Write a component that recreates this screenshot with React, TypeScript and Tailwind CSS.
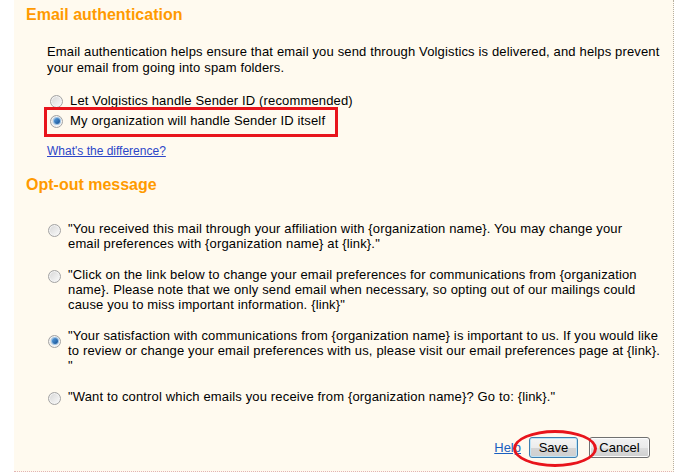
import React from 'react';

function Radio({ checked = false }: { checked?: boolean }) {
  return (
    <span className="relative inline-flex w-[13px] h-[13px] shrink-0 items-center justify-center rounded-full border border-[#a3a3a3] bg-gradient-to-br from-[#d6d6d6] to-[#fbfbfb] shadow-[inset_0_0_0_1px_#f4f4f4]">
      {checked && (
        <span className="block w-[6px] h-[6px] rounded-full bg-gradient-to-br from-[#5aa0e0] to-[#0f4f94] shadow-[0_0_0_1px_#9cc3e6]" />
      )}
    </span>
  );
}

function Option({ checked = false, lines }: { checked?: boolean; lines: string[] }) {
  return (
    <div className="flex items-start">
      <div className="w-[20px] pt-[2px]">
        <Radio checked={checked} />
      </div>
      <div className="leading-[15px] whitespace-nowrap">
        {lines.map((l, i) => (
          <div key={i} className="h-[15px]">{l}</div>
        ))}
      </div>
    </div>
  );
}

export default function App() {
  return (
    <div className="w-[678px] h-[472px] bg-white overflow-hidden" style={{ fontFamily: '"Liberation Sans", Arial, sans-serif' }}>
      <div className="relative ml-[14px] w-[660px] h-[472px] bg-[#fffaef] border-r border-b border-dotted border-r-[#b8b0a0] border-b-[#e2b4b4] text-[13px] text-black tracking-[0.15px]">
        <h2 className="pl-[12px] pt-[6px] text-[16px] leading-[18px] font-bold tracking-normal text-[#ff9a00]">Email authentication</h2>

        <p className="mt-[20px] ml-[33px] leading-[16px]">
          Email authentication helps ensure that email you send through Volgistics is delivered, and helps prevent
          <br />
          your email from going into spam folders.
        </p>

        <div className="mt-[15px] ml-[36px]">
          <div className="flex h-[20px] items-center gap-[7px]">
            <Radio />
            <span>Let Volgistics handle Sender ID (recommended)</span>
          </div>
          <div className="relative flex h-[20px] items-center gap-[7px]">
            <Radio checked />
            <span>My organization will handle Sender ID itself</span>
            <span className="absolute left-[-6px] top-[-4px] w-[294px] h-[30px] border-[3px] border-[#e8141c]" />
          </div>
        </div>

        <a href="#" className="block mt-[13px] ml-[33px] w-fit text-[12px] leading-[14px] tracking-normal text-[#2c46c8] underline">
          What's the difference?
        </a>

        <h2 className="mt-[18px] pl-[12px] text-[16px] leading-[18px] font-bold tracking-normal text-[#ff9a00]">Opt-out message</h2>

        <div className="mt-[27px] ml-[34px] flex flex-col gap-[16px]">
          <Option
            lines={[
              '"You received this mail through your affiliation with {organization name}. You may change your',
              'email preferences with {organization name} at {link}."',
            ]}
          />
          <Option
            lines={[
              '"Click on the link below to change your email preferences for communications from {organization',
              'name}. Please note that we only send email when necessary, so opting out of our mailings could',
              'cause you to miss important information. {link}"',
            ]}
          />
          <Option
            checked
            lines={[
              '"Your satisfaction with communications from {organization name} is important to us. If you would like',
              'to review or change your email preferences with us, please visit our email preferences page at {link}.',
              '"',
            ]}
          />
          <Option
            lines={['"Want to control which emails you receive from {organization name}? Go to: {link}."']}
          />
        </div>

        <div className="absolute right-[23px] bottom-[13px] flex items-center tracking-normal">
          <a href="#" className="text-[13px] leading-[15px] text-[#1a5fc0] underline mr-[8px]">Help</a>
          <div className="relative">
            <button className="w-[49px] h-[21px] rounded-[3px] border border-[#3c7fb1] shadow-[inset_0_0_0_1px_#bfe4f7] bg-[linear-gradient(#f5f5f5_0%,#ececec_50%,#d4d4d4_52%,#cfcfcf_100%)] text-[13px] leading-[19px] text-black">
              Save
            </button>
            <span className="absolute left-[-16px] top-[-7px] w-[84px] h-[37px] rounded-[50%] border-[3px] border-[#e8141c]" />
          </div>
          <button className="ml-[11px] w-[61px] h-[21px] rounded-[3px] border border-[#707070] shadow-[inset_0_0_0_1px_#fcfcfc] bg-[linear-gradient(#f2f2f2_0%,#ebebeb_50%,#dddddd_52%,#cfcfcf_100%)] text-[13px] leading-[19px] text-black">
            Cancel
          </button>
        </div>
      </div>
    </div>
  );
}
